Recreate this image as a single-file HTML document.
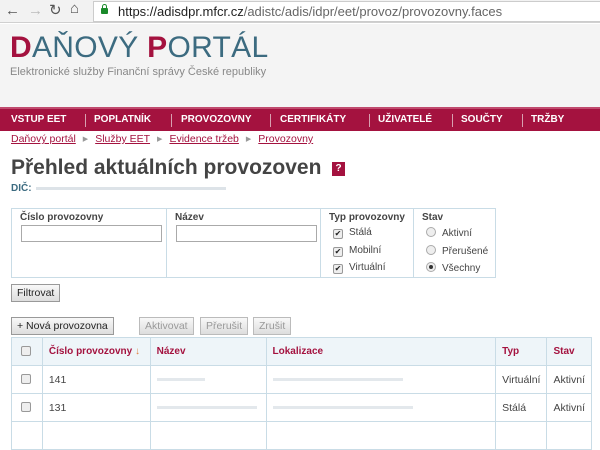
<!DOCTYPE html>
<html><head><meta charset="utf-8"><style>
*{box-sizing:border-box;margin:0;padding:0}
body{width:600px;height:434px;overflow:hidden;background:#fff;font-family:"Liberation Sans",sans-serif;font-size:11px;color:#333;position:relative}
.abs{position:absolute}
.addr{top:0;left:0;width:600px;height:23px;background:#f2f2f2;border-bottom:1px solid #d0d0d0}
.url{left:93px;top:1px;width:520px;height:21px;background:#fff;border:1px solid #ccc;border-right:none;font-size:13px;line-height:19px;padding-left:24px;color:#666}
.url b{font-weight:normal;color:#222}
.hdr{top:24px;left:0;width:600px;height:83px;background:#f4f4f4}
.logo{left:10px;top:31px;font-size:30px;color:#3c6b80;letter-spacing:0.3px}
.logo span{color:#a4123f;font-weight:bold}
.sub{left:10px;top:66px;font-size:11px;color:#888}
.nav{top:107px;left:0;width:600px;height:24px;background:#a4123f;border-top:2px solid #c04a6e;color:#fff;font-weight:bold;font-size:10px;line-height:22px}
.nav span{position:absolute;top:0}
.nav i{position:absolute;top:5px;width:1px;height:13px;background:#d8a0b0}
.bc{top:133px;left:11px;font-size:10.5px;color:#a4123f}
.bc a{color:#a4123f;text-decoration:underline}
.bc em{font-style:normal;color:#999;font-size:7px;margin:0 7px;vertical-align:1px}
h1{position:absolute;left:11px;top:156px;font-size:21px;color:#444;font-weight:bold}
.q{left:332px;top:162px;width:13px;height:14px;background:#a4123f;color:#fff;font-size:10px;font-weight:bold;text-align:center;line-height:14px}
.dic{left:11px;top:183px;font-size:10px;font-weight:bold;color:#3c6b80}
.blur{display:inline-block;width:190px;height:3px;background:#dde3e8;vertical-align:middle;margin-left:4px}
.fb{top:208px;left:11px;width:485px;height:70px;border:1px solid #c9dce6}
.fc{position:absolute;top:0;height:68px;border-right:1px solid #c9dce6;padding:3px 8px;font-size:10px;font-weight:bold;color:#444}
.inp{position:absolute;left:9px;top:16px;width:141px;height:17px;border:1px solid #aaa;background:#fff}
.opt{position:absolute;font-weight:normal;font-size:10px;color:#444}
.cb{display:inline-block;width:10px;height:10px;border:1px solid #999;background:#eee;border-radius:2px;vertical-align:-1px;margin-right:6px;font-size:8px;line-height:8px;text-align:center;color:#222}
.rb{display:inline-block;width:10px;height:10px;border:1px solid #aaa;background:#eee;border-radius:50%;vertical-align:-1px;margin-right:6px;position:relative}
.btn{position:absolute;height:18px;border:1px solid #999;background:linear-gradient(#f8f8f8,#ddd);font-size:10.5px;line-height:16px;padding:0 5px;color:#222}
.dis{color:#999;border-color:#bbb}
table{position:absolute;left:11px;top:337px;width:581px;border-collapse:collapse;font-size:10.5px}
td,th{border:1px solid #c9dce6;padding:0 6px;text-align:left;color:#444;font-weight:normal}
th{background:#eef5f9;height:28px;color:#a4123f;font-weight:bold;font-size:10px}
td{height:28px}
.g{display:inline-block;width:110px;height:3px;background:#e3e8ec;vertical-align:middle}
</style></head><body>
<div class="abs addr"></div>
<div class="abs" style="left:5px;top:2px;font-size:15px;color:#555">&#8592;</div>
<div class="abs" style="left:28px;top:2px;font-size:15px;color:#bbb">&#8594;</div>
<div class="abs" style="left:49px;top:1px;font-size:15px;color:#555">&#8635;</div>
<div class="abs" style="left:70px;top:0px;font-size:15px;color:#555">&#8962;</div>
<div class="abs url"><b>https://adisdpr.mfcr.cz</b>/adistc/adis/idpr/eet/provoz/provozovny.faces</div>
<div class="abs" style="left:101px;top:8px;width:7px;height:6px;background:#1a8a2a;border-radius:1px"></div>
<div class="abs" style="left:102px;top:4px;width:5px;height:5px;border:1.5px solid #1a8a2a;border-bottom:none;border-radius:3px 3px 0 0"></div>
<div class="abs hdr"></div>
<div class="abs logo"><span>D</span>AŇOVÝ <span>P</span>ORTÁL</div>
<div class="abs sub">Elektronické služby Finanční správy České republiky</div>
<div class="abs nav">
<span style="left:11px">VSTUP EET</span><i style="left:85px"></i>
<span style="left:94px">POPLATNÍK</span><i style="left:171px"></i>
<span style="left:181px">PROVOZOVNY</span><i style="left:270px"></i>
<span style="left:280px">CERTIFIKÁTY</span><i style="left:369px"></i>
<span style="left:378px">UŽIVATELÉ</span><i style="left:452px"></i>
<span style="left:461px">SOUČTY</span><i style="left:522px"></i>
<span style="left:531px">TRŽBY</span>
</div>
<div class="abs bc"><a>Daňový portál</a><em>▶</em><a>Služby EET</a><em>▶</em><a>Evidence tržeb</a><em>▶</em><a>Provozovny</a></div>
<h1>Přehled aktuálních provozoven</h1>
<div class="abs q">?</div>
<div class="abs dic">DIČ:<span class="blur"></span></div>
<div class="abs fb">
<div class="fc" style="left:0;width:155px">Číslo provozovny<div class="inp"></div></div>
<div class="fc" style="left:155px;width:154px">Název<div class="inp"></div></div>
<div class="fc" style="left:309px;width:93px">Typ provozovny
<div class="opt" style="left:12px;top:18px"><span class="cb">✔</span>Stálá</div>
<div class="opt" style="left:12px;top:36px"><span class="cb">✔</span>Mobilní</div>
<div class="opt" style="left:12px;top:53px"><span class="cb">✔</span>Virtuální</div></div>
<div class="fc" style="left:402px;width:82px;border-right:none">Stav
<div class="opt" style="left:12px;top:18px"><span class="rb"></span>Aktivní</div>
<div class="opt" style="left:12px;top:36px"><span class="rb"></span>Přerušené</div>
<div class="opt" style="left:12px;top:53px"><span class="rb"><span style="position:absolute;left:2px;top:2px;width:4px;height:4px;border-radius:50%;background:#333"></span></span>Všechny</div></div>
</div>
<div class="btn" style="left:11px;top:284px">Filtrovat</div>
<div class="btn" style="left:11px;top:317px">+ Nová provozovna</div>
<div class="btn dis" style="left:139px;top:317px">Aktivovat</div>
<div class="btn dis" style="left:200px;top:317px">Přerušit</div>
<div class="btn dis" style="left:253px;top:317px">Zrušit</div>
<table>
<tr><th style="width:31px"><span class="cb" style="margin:0 0 0 3px"></span></th><th style="width:109px">Číslo provozovny <span style="color:#e08040">↓</span></th><th style="width:116px">Název</th><th style="width:232px">Lokalizace</th><th style="width:50px">Typ</th><th>Stav</th></tr>
<tr><td><span class="cb" style="margin:0 0 0 3px"></span></td><td>141</td><td><span class="g" style="width:48px"></span></td><td><span class="g" style="width:130px"></span></td><td>Virtuální</td><td>Aktivní</td></tr>
<tr><td><span class="cb" style="margin:0 0 0 3px"></span></td><td>131</td><td><span class="g" style="width:100px"></span></td><td><span class="g" style="width:140px"></span></td><td>Stálá</td><td>Aktivní</td></tr>
<tr><td></td><td></td><td></td><td></td><td></td><td></td></tr>
</table>
</body></html>
